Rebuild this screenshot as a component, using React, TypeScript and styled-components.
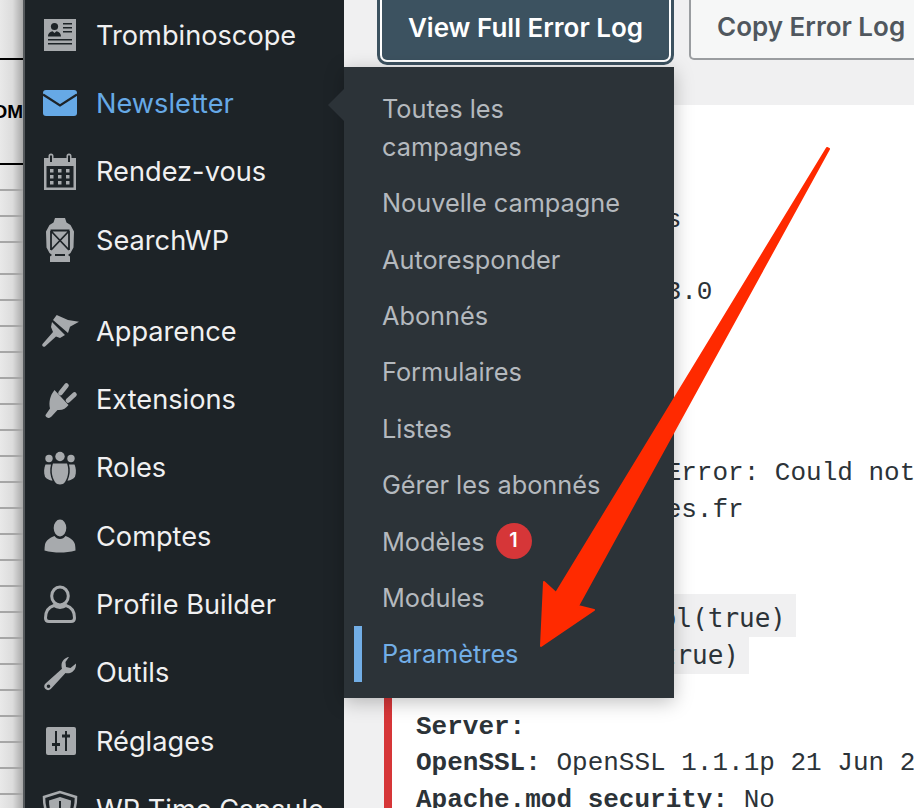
import React from 'react';
import styled, { createGlobalStyle } from 'styled-components';

const GlobalStyle = createGlobalStyle`
    html, body {
        margin: 0;
        padding: 0;
        background: #f0f0f1;
    }
`;

const ICON = '#a7aaad';
const BG = '#1d2327';

const IdCardIcon = () => (
    <svg viewBox='0 0 40 40' width='40' height='40'>
        <rect x='4' y='4' width='32' height='32' fill={ICON} />
        <circle cx='14.5' cy='11.5' r='3.6' fill={BG} />
        <path d='M8 21.5c0-3.4 2.4-4.6 4.6-5.2l1.9 1.6 1.9-1.6c2.2.6 4.6 1.8 4.6 5.2z' fill={BG} />
        <path d='M23 8h9v1.600h-9zM23 12h9v1.600h-9zM23 16h9v1.600h-9zM8 24h24v1.600H8zM8 28h24v1.600H8z' fill={BG} />
    </svg>
);

const MailIcon = () => (
    <svg viewBox='0 0 40 40' width='40' height='40'>
        <rect x='3' y='7' width='34' height='26' rx='3' fill='#66a9e6' />
        <path d='M3 11.5l17 11 17-11' fill='none' stroke={BG} strokeWidth='2.2' />
    </svg>
);

const CalendarIcon = () => (
    <svg viewBox='0 0 40 40' width='40' height='40'>
        <path
            fillRule='evenodd'
            fill={ICON}
            d='M4 6h4.500V4a2.500 2.500 0 0 1 5 0v2h13V4a2.500 2.500 0 0 1 5 0v2H36v32H4zM6.500 14v21.500h27V14zM10 3.500v6.500h2V3.500zM28 3.500v6.500h2V3.500z'
        />
        <path
            fill={ICON}
            d='M10 17h3.500v3.500H10zM18 17h3.500v3.500H18zM26 17h3.500v3.500H26zM10 23h3.500v3.500H10zM18 23h3.500v3.500H18zM26 23h3.500v3.500H26zM10 29h3.500v3.500H10zM18 29h3.500v3.500H18zM26 29h3.500v3.500H26z'
        />
    </svg>
);

const LanternIcon = () => (
    <svg viewBox='0 0 40 44' width='40' height='44'>
        <path
            fill={ICON}
            d='M15 0h10l1.500 4.500 4 2.500 3.500 6.500-.5 16-3 5.500-2.500 2 2 1.500V44H10v-5.500l2-1.500-2.500-2-3-5.500-.5-16L9.500 7l4-2.500z'
        />
        <path
            fill='none'
            stroke={BG}
            strokeWidth='1.800'
            d='M11 13v19M29 13v19M11 13l18 19M29 13L11 32M10.500 12.500h19M15 37h10'
        />
    </svg>
);

const BrushIcon = () => (
    <svg viewBox='0 0 40 40' width='40' height='40'>
        <path fill={ICON} d='M16.700 4l11.300 5 11 1.700-9 5L28 22 13 9z' />
        <path fill={ICON} d='M12 11l13 13-5 3-4-1.500L5 35.500c-2 1-3.500-1-2.500-2.500L13 21l-2-5z' />
    </svg>
);

const PlugIcon = () => (
    <svg viewBox='0 0 40 40' width='40' height='40'>
        <path fill={ICON} d='M14.500 10l14 15c-2.500 3.500-6 5.500-11 5l-6 6.500c-1.500 1.200-2.500 1.500-3 1.500-2.200-.4-3.400-2-3-3l4.500-6.500c-1.500-6 0-13 4.500-18.500z' />
        <path fill='none' stroke={ICON} strokeWidth='4.600' strokeLinecap='round' d='M20.500 13l6-7.500M28 20.500l6.500-6' />
    </svg>
);

const GroupIcon = () => (
    <svg viewBox='0 0 40 40' width='40' height='40'>
        <circle cx='20' cy='8.500' r='4.700' fill={ICON} />
        <circle cx='9' cy='10.500' r='3.700' fill={ICON} />
        <circle cx='31' cy='10.500' r='3.700' fill={ICON} />
        <path fill={ICON} d='M13 15.500h14c2 5 1.800 13-2 18.500-1.400 1.800-3 2.500-5 2.500s-3.600-.7-5-2.500c-3.800-5.500-4-13.500-2-18.500z' />
        <path fill={ICON} d='M5.500 16.500h5.500c-1.500 5.500-.8 11 1.500 16.200-3.500-.5-6-2-7.500-4-1.500-4-1-9 .5-12.200zM34.500 16.500H29c1.500 5.500.8 11-1.500 16.200 3.500-.5 6-2 7.500-4 1.500-4 1-9-.5-12.200z' />
    </svg>
);

const UserIcon = () => (
    <svg viewBox='0 0 40 40' width='40' height='40'>
        <ellipse cx='20' cy='12' rx='6.300' ry='8.500' fill={ICON} />
        <path fill={ICON} d='M14.500 20c1.500 2 3 3 5.500 3s4-1 5.500-3c5 2 8.500 4.500 9.500 8.500.3 2 .5 4 .5 6-5 1.500-10.500 2-15.500 2s-10.500-.5-15.500-2c0-2 .2-4 .5-6 1-4 4.500-6.500 9.500-8.500z' />
    </svg>
);

const UserOutlineIcon = () => (
    <svg viewBox='0 0 40 40' width='40' height='40'>
        <ellipse cx='20' cy='11' rx='8.300' ry='9' fill='none' stroke={ICON} strokeWidth='3' />
        <path fill='none' stroke={ICON} strokeWidth='3' d='M14 20.500C9 22 5.500 26 5.500 33c0 2 1 3.500 3.500 3.500h22c2.500 0 3.500-1.500 3.500-3.500 0-7-3.500-11-8.500-12.500-3.500 2.500-8.500 2.500-12 0z' />
    </svg>
);

const WrenchIcon = () => (
    <svg viewBox='0 0 40 40' width='40' height='40'>
        <path
            fillRule='evenodd'
            fill={ICON}
            d='M29 4c-4 .5-7.500 4-7.500 8.500 0 1.200.2 2.200.5 3.200L5.500 30.500c-1.700 1.600-1.700 4 0 5.500 1.500 1.600 3.800 1.500 5.300 0L25.500 20c4.500 1.500 11-2 10.500-9.500l-5.500 4.500-4.500-1-.5-5zM8.500 31.500a1.800 1.800 0 1 1 0 3.600 1.800 1.800 0 0 1 0-3.600z'
        />
    </svg>
);

const SlidersIcon = () => (
    <svg viewBox='0 0 40 40' width='40' height='40'>
        <rect x='6' y='6' width='30' height='28' rx='2' fill={ICON} />
        <path fill='none' stroke={BG} strokeWidth='2' d='M16 10v20M26 10v20' />
        <path fill={BG} d='M12 22h8v3h-8zM22 13.500h8v3h-8z' />
    </svg>
);

const ShieldIcon = () => (
    <svg viewBox='0 0 40 40' width='40' height='40'>
        <path fill='none' stroke={ICON} strokeWidth='2.500' d='M20 3L4 8c0 12 3 23 16 30 13-7 16-18 16-30z' />
        <path fill={ICON} d='M20 8L9 11.500c0 9 2.500 16.500 11 22 8.500-5.500 11-13 11-22z' />
        <path fill='none' stroke={BG} strokeWidth='2' d='M20 12v10l-6 6M20 22l6 6' />
    </svg>
);

const menuItems = [
    { label: 'Trombinoscope', icon: <IdCardIcon /> },
    { label: 'Newsletter', icon: <MailIcon />, current: true },
    { label: 'Rendez-vous', icon: <CalendarIcon /> },
    { label: 'SearchWP', icon: <LanternIcon />, separated: true },
    { label: 'Apparence', icon: <BrushIcon /> },
    { label: 'Extensions', icon: <PlugIcon /> },
    { label: 'Roles', icon: <GroupIcon /> },
    { label: 'Comptes', icon: <UserIcon /> },
    { label: 'Profile Builder', icon: <UserOutlineIcon /> },
    { label: 'Outils', icon: <WrenchIcon /> },
    { label: 'Réglages', icon: <SlidersIcon /> },
    { label: 'WP Time Capsule', icon: <ShieldIcon /> }
];

const subItems = [
    'Toutes les campagnes',
    'Nouvelle campagne',
    'Autoresponder',
    'Abonnés',
    'Formulaires',
    'Listes',
    'Gérer les abonnés',
    'Modèles',
    'Modules',
    'Paramètres'
];

const tableRows = [60, 105, 26, 26, 26, 32, 26, 26, 26, 26, 26, 26, 26, 26, 26, 26, 26, 26, 26, 26, 26, 26, 26, 26, 26, 26];

export default function App() {
    return (
        <Page>
            <GlobalStyle />
            <TableStrip>
                {tableRows.map((height, index) => (
                    <TableRow key={'row-' + index} $height={height} $heavy={index < 2}>
                        {index === 1 && <RowLabel>NOM</RowLabel>}
                    </TableRow>
                ))}
            </TableStrip>
            <Sidebar>
                {menuItems.map(item => (
                    <MenuRow key={item.label} $separated={item.separated}>
                        <MenuIcon>{item.icon}</MenuIcon>
                        <MenuLabel $current={item.current}>{item.label}</MenuLabel>
                    </MenuRow>
                ))}
            </Sidebar>
            <Main>
                <ButtonBar>
                    <PrimaryButton>View Full Error Log</PrimaryButton>
                    <SecondaryButton>Copy Error Log</SecondaryButton>
                </ButtonBar>
                <LogPanel>
                    <LogLine>&nbsp;</LogLine>
                    <LogLine>&nbsp;</LogLine>
                    <LogLine>Statut des emails</LogLine>
                    <LogLine>&nbsp;</LogLine>
                    <LogLine>Mailer version: 3.0</LogLine>
                    <LogLine>&nbsp;</LogLine>
                    <LogLine>&nbsp;</LogLine>
                    <LogLine>&nbsp;</LogLine>
                    <LogLine>&nbsp;</LogLine>
                    <LogLine>Connection Test Error: Could not connect</LogLine>
                    <LogLine>Host: mail.agences.fr</LogLine>
                    <LogLine>&nbsp;</LogLine>
                    <LogLine>&nbsp;</LogLine>
                    <LogLine>
                        <Code>email_verify_bool(true)</Code>
                    </LogLine>
                    <LogLine>
                        <Code>ssl_verify_off(true)</Code>
                    </LogLine>
                    <LogLine>&nbsp;</LogLine>
                    <LogLine>
                        <b>Server:</b>
                    </LogLine>
                    <LogLine>
                        <b>OpenSSL:</b> OpenSSL 1.1.1p 21 Jun 2022
                    </LogLine>
                    <LogLine>
                        <b>Apache.mod_security:</b> No
                    </LogLine>
                </LogPanel>
            </Main>
            <Flyout>
                {subItems.map(item => (
                    <SubItem key={item} $active={item === 'Paramètres'}>
                        {item}
                        {item === 'Modèles' && <Badge>1</Badge>}
                    </SubItem>
                ))}
            </Flyout>
            <ArrowOverlay viewBox='0 0 914 808' width='914' height='808'>
                <polygon
                    points='827,148 829,149 578,606 594,610 541,646 544,582 556,593'
                    fill='#ff2a00'
                    stroke='#ff2a00'
                    strokeWidth='2'
                    strokeLinejoin='round'
                />
            </ArrowOverlay>
        </Page>
    );
}

const Page = styled.div`
    position: relative;
    display: grid;
    grid-template-columns: 25px 319px 570px;
    width: 914px;
    height: 808px;
    overflow: hidden;
    font-family: Inter, 'Liberation Sans', sans-serif;
`;

const TableStrip = styled.div`
    display: flex;
    flex-direction: column;
    box-sizing: border-box;
    height: 808px;
    overflow: hidden;
    border-right: 2px solid #55595c;
    background: linear-gradient(90deg, #e9e9e9 0%, #dcdcdc 55%, #a9a9a9 100%);
`;

const TableRow = styled.div<{ $height: number; $heavy: boolean }>`
    flex: none;
    display: flex;
    align-items: center;
    justify-content: flex-end;
    box-sizing: border-box;
    height: ${props => props.$height}px;
    border-bottom: 2px solid ${props => (props.$heavy ? '#000000' : '#a6a6a6')};
    overflow: hidden;
`;

const RowLabel = styled.span`
    font-family: 'Liberation Sans', sans-serif;
    font-size: 19px;
    font-weight: 700;
    color: #000000;
`;

const Sidebar = styled.nav`
    box-sizing: border-box;
    height: 808px;
    padding-top: 1px;
    background: #1d2327;
    overflow: hidden;
`;

const MenuRow = styled.div<{ $separated?: boolean }>`
    display: flex;
    align-items: center;
    height: 68.3px;
    margin-bottom: ${props => (props.$separated ? '23px' : '0')};
`;

const MenuIcon = styled.span`
    flex: none;
    display: flex;
    justify-content: center;
    width: 40px;
    margin-left: 15px;
    margin-right: 16px;
`;

const MenuLabel = styled.span<{ $current?: boolean }>`
    font-size: 27.2px;
    white-space: nowrap;
    color: ${props => (props.$current ? '#66a9e6' : '#f0f0f1')};
`;

const Main = styled.main`
    display: flex;
    flex-direction: column;
    height: 808px;
    background: #f0f0f1;
    overflow: hidden;
`;

const ButtonBar = styled.div`
    flex: none;
    display: flex;
    gap: 20px;
    box-sizing: border-box;
    height: 105px;
    padding-left: 38px;
`;

const PrimaryButton = styled.button`
    flex: none;
    box-sizing: border-box;
    width: 287px;
    height: 60px;
    padding: 0 0 6px;
    border: 0;
    border-radius: 0 0 5px 5px;
    background: #3c5260;
    box-shadow: 0 0 0 2px #ffffff, 0 0 0 5px #3c5260;
    color: #ffffff;
    font-family: Inter, sans-serif;
    font-size: 26px;
    font-weight: 600;
    white-space: nowrap;
`;

const SecondaryButton = styled.button`
    flex: none;
    box-sizing: border-box;
    width: 300px;
    height: 60px;
    padding: 0 0 6px 26px;
    border: 2px solid #9a9da0;
    border-top: 0;
    border-radius: 0 0 5px 5px;
    background: #f6f7f7;
    color: #50575e;
    text-align: left;
    font-family: Inter, sans-serif;
    font-size: 26px;
    font-weight: 600;
    white-space: nowrap;
`;

const LogPanel = styled.section`
    flex: 1;
    box-sizing: border-box;
    margin-left: 40px;
    padding: 24px 0 0 24px;
    border-left: 8px solid #d63638;
    background: #ffffff;
    color: #2c3338;
    font-family: 'Liberation Mono', monospace;
    font-size: 26px;
    overflow: hidden;
`;

const LogLine = styled.div`
    height: 36.25px;
    line-height: 36.25px;
    white-space: nowrap;
`;

const Code = styled.code`
    padding: 9px 10px 4px;
    background: #f0f0f1;
    font-family: 'DejaVu Sans Mono', monospace;
    font-size: 26px;
`;

const Flyout = styled.ul`
    position: absolute;
    top: 67px;
    left: 344px;
    box-sizing: border-box;
    width: 330px;
    height: 631px;
    margin: 0;
    padding: 14px 0 0 10px;
    list-style: none;
    background: #2c3338;
    box-shadow: 0 4px 18px rgba(0, 0, 0, 0.25);

    &::before {
        content: '';
        position: absolute;
        top: 22px;
        left: -16px;
        border-style: solid;
        border-width: 16px 16px 16px 0;
        border-color: transparent #2c3338 transparent transparent;
    }
`;

const SubItem = styled.li<{ $active: boolean }>`
    padding: 9.4px 40px 9.4px 20px;
    border-left: 8px solid ${props => (props.$active ? '#72aee6' : 'transparent')};
    color: ${props => (props.$active ? '#72aee6' : '#b4b9be')};
    font-size: 25.3px;
    line-height: 37.6px;
`;

const Badge = styled.span`
    display: inline-flex;
    align-items: center;
    justify-content: center;
    width: 36px;
    height: 36px;
    margin-left: 11px;
    border-radius: 50%;
    background: #d63638;
    color: #ffffff;
    font-size: 20px;
    font-weight: 600;
    vertical-align: top;
`;

const ArrowOverlay = styled.svg`
    position: absolute;
    top: 0;
    left: 0;
    pointer-events: none;
`;
